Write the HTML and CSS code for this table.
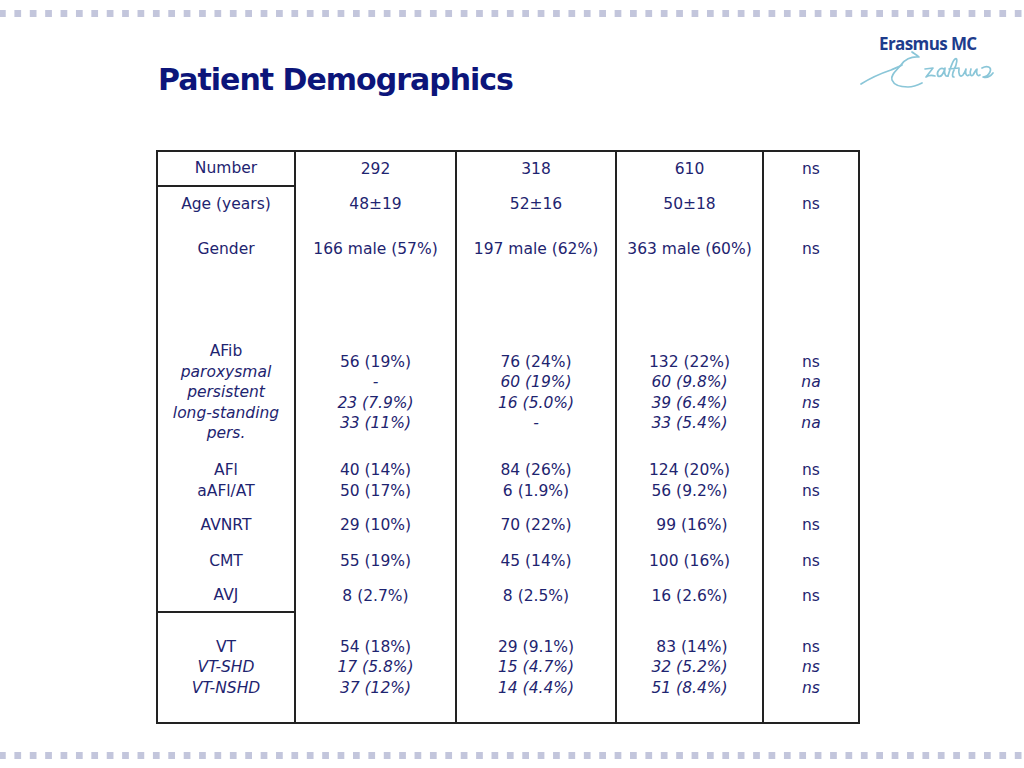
FILE: index.html
```html
<!DOCTYPE html>
<html>
<head>
<meta charset="utf-8">
<title>Patient Demographics</title>
<link rel="stylesheet" href="styles.css">
</head>
<body>
<div class="slide">
  <div class="dots dots-top"></div>
  <header class="header">
    <h1 class="title">Patient Demographics</h1>
    <div class="logo">
      <span class="logo-name">Erasmus MC</span>
      <svg class="logo-sig" width="150" height="45" viewBox="0 0 150 45">
        <g fill="none" stroke="#8ac6d8" stroke-width="1.7" stroke-linecap="round" stroke-linejoin="round">
          <path d="M6 36 C 14 31, 24 26, 36 22 C 40 20, 44 19, 47 17"/>
          <path d="M57 4 C 60 6, 62 7, 64 9 C 56 8, 49 12, 46 17 C 42 22, 35 27, 37 32 C 39 37, 46 39, 53 39 C 58 39, 63 37, 67 35"/>
          <path d="M70 21 L 78 20 L 71 29 C 74 27, 77 27, 80 28"/>
          <path d="M89 21 C 85 19, 81 24, 83 28 C 86 30, 89 25, 90 20 C 89 25, 90 29, 93 28"/>
          <path d="M93 28 C 95 22, 97 13, 100 11 C 103 9, 102 16, 99 22 C 97 26, 97 29, 99 29 M 94 21 L 104 20"/>
          <path d="M104 21 C 103 26, 105 30, 108 27 C 110 24, 111 21, 111 21 C 110 25, 111 29, 114 27"/>
          <path d="M116 21 C 114 26, 116 29, 118 27 C 120 24, 121 21, 122 21 C 121 25, 122 29, 125 27"/>
          <path d="M127 20 C 132 17, 137 19, 135 24 C 133 28, 130 29, 128 29 C 131 30, 135 29, 138 25"/>
        </g>
      </svg>
    </div>
  </header>

  <div class="table">
    <!-- row 1 -->
    <div class="cell c1 line-b">Number</div>
    <div class="cell">292</div>
    <div class="cell">318</div>
    <div class="cell">610</div>
    <div class="cell">ns</div>
    <!-- row 2 -->
    <div class="cell c1">Age (years)</div>
    <div class="cell">48±19</div>
    <div class="cell">52±16</div>
    <div class="cell">50±18</div>
    <div class="cell">ns</div>
    <!-- row 3 -->
    <div class="cell c1">Gender</div>
    <div class="cell">166 male (57%)</div>
    <div class="cell">197 male (62%)</div>
    <div class="cell">363 male (60%)</div>
    <div class="cell">ns</div>
    <!-- spacer row -->
    <div class="cell c1"></div>
    <div class="cell"></div>
    <div class="cell"></div>
    <div class="cell"></div>
    <div class="cell"></div>
    <!-- AFib -->
    <div class="cell c1"><span>AFib</span><i>paroxysmal</i><i>persistent</i><i>long-standing</i><i>pers.</i></div>
    <div class="cell"><span>56 (19%)</span><i>-</i><i>23 (7.9%)</i><i>33 (11%)</i></div>
    <div class="cell"><span>76 (24%)</span><i>60 (19%)</i><i>16 (5.0%)</i><i>-</i></div>
    <div class="cell"><span>132 (22%)</span><i>60 (9.8%)</i><i>39 (6.4%)</i><i>33 (5.4%)</i></div>
    <div class="cell"><span>ns</span><i>na</i><i>ns</i><i>na</i></div>
    <!-- AFl -->
    <div class="cell c1"><span>AFl</span><span>aAFl/AT</span></div>
    <div class="cell"><span>40 (14%)</span><span>50 (17%)</span></div>
    <div class="cell"><span>84 (26%)</span><span>6 (1.9%)</span></div>
    <div class="cell"><span>124 (20%)</span><span>56 (9.2%)</span></div>
    <div class="cell"><span>ns</span><span>ns</span></div>
    <!-- AVNRT -->
    <div class="cell c1">AVNRT</div>
    <div class="cell">29 (10%)</div>
    <div class="cell">70 (22%)</div>
    <div class="cell">&nbsp;99 (16%)</div>
    <div class="cell">ns</div>
    <!-- CMT -->
    <div class="cell c1">CMT</div>
    <div class="cell">55 (19%)</div>
    <div class="cell">45 (14%)</div>
    <div class="cell">100 (16%)</div>
    <div class="cell">ns</div>
    <!-- AVJ -->
    <div class="cell c1 line-b">AVJ</div>
    <div class="cell">8 (2.7%)</div>
    <div class="cell">8 (2.5%)</div>
    <div class="cell">16 (2.6%)</div>
    <div class="cell">ns</div>
    <!-- VT -->
    <div class="cell c1"><span>VT</span><i>VT-SHD</i><i>VT-NSHD</i></div>
    <div class="cell"><span>54 (18%)</span><i>17 (5.8%)</i><i>37 (12%)</i></div>
    <div class="cell"><span>29 (9.1%)</span><i>15 (4.7%)</i><i>14 (4.4%)</i></div>
    <div class="cell"><span>&nbsp;83 (14%)</span><i>32 (5.2%)</i><i>51 (8.4%)</i></div>
    <div class="cell"><span>ns</span><i>ns</i><i>ns</i></div>
  </div>

  <div class="dots dots-bottom"></div>
</div>
</body>
</html>
```

FILE: styles.css
```css
html, body {
  margin: 0;
  padding: 0;
  background: #ffffff;
}

.slide {
  width: 1024px;
  height: 768px;
  display: flex;
  flex-direction: column;
  font-family: "DejaVu Sans", "Liberation Sans", sans-serif;
  color: #1e2470;
}

.dots {
  height: 7px;
  flex: none;
  background-image: linear-gradient(to right, #c3c6dc 0 7px, transparent 7px);
  background-size: 15.4px 7px;
  background-repeat: repeat-x;
  background-position: -1px 0;
}

.dots-top {
  margin-top: 10px;
}

.header {
  height: 133px;
  flex: none;
  display: flex;
  justify-content: space-between;
  align-items: flex-start;
}

.title {
  margin: 0;
  padding: 45px 0 0 158px;
  font-size: 30px;
  line-height: 36px;
  font-weight: bold;
  color: #0c157a;
  letter-spacing: -1px;
}

.logo {
  width: 150px;
  margin-right: 19px;
  padding-top: 18px;
  display: flex;
  flex-direction: column;
}

.logo-name {
  font-family: "Open Sans", "DejaVu Sans", sans-serif;
  font-weight: bold;
  font-size: 17px;
  line-height: 18px;
  color: #1d3c8c;
  letter-spacing: -0.6px;
  padding-left: 24px;
}

.logo-sig {
  display: block;
  margin-top: -5px;
}

.table {
  margin-left: 156px;
  width: 704px;
  box-sizing: border-box;
  border: 2px solid #222222;
  display: grid;
  grid-template-columns: 136px 161px 160px 147px 96px;
  grid-template-rows: 35px 35px 54px 55px 123px 53px 37px 35px 34px 109px;
  font-size: 15.5px;
  line-height: 20.5px;
}

.cell {
  box-sizing: border-box;
  border-left: 2px solid #222222;
  display: flex;
  flex-direction: column;
  justify-content: center;
  align-items: center;
  text-align: center;
  white-space: pre;
}

.cell.c1 {
  border-left: none;
}

.cell.line-b {
  border-bottom: 2px solid #222222;
}

.cell i {
  font-style: italic;
}

.dots-bottom {
  margin-top: 28px;
}
```
